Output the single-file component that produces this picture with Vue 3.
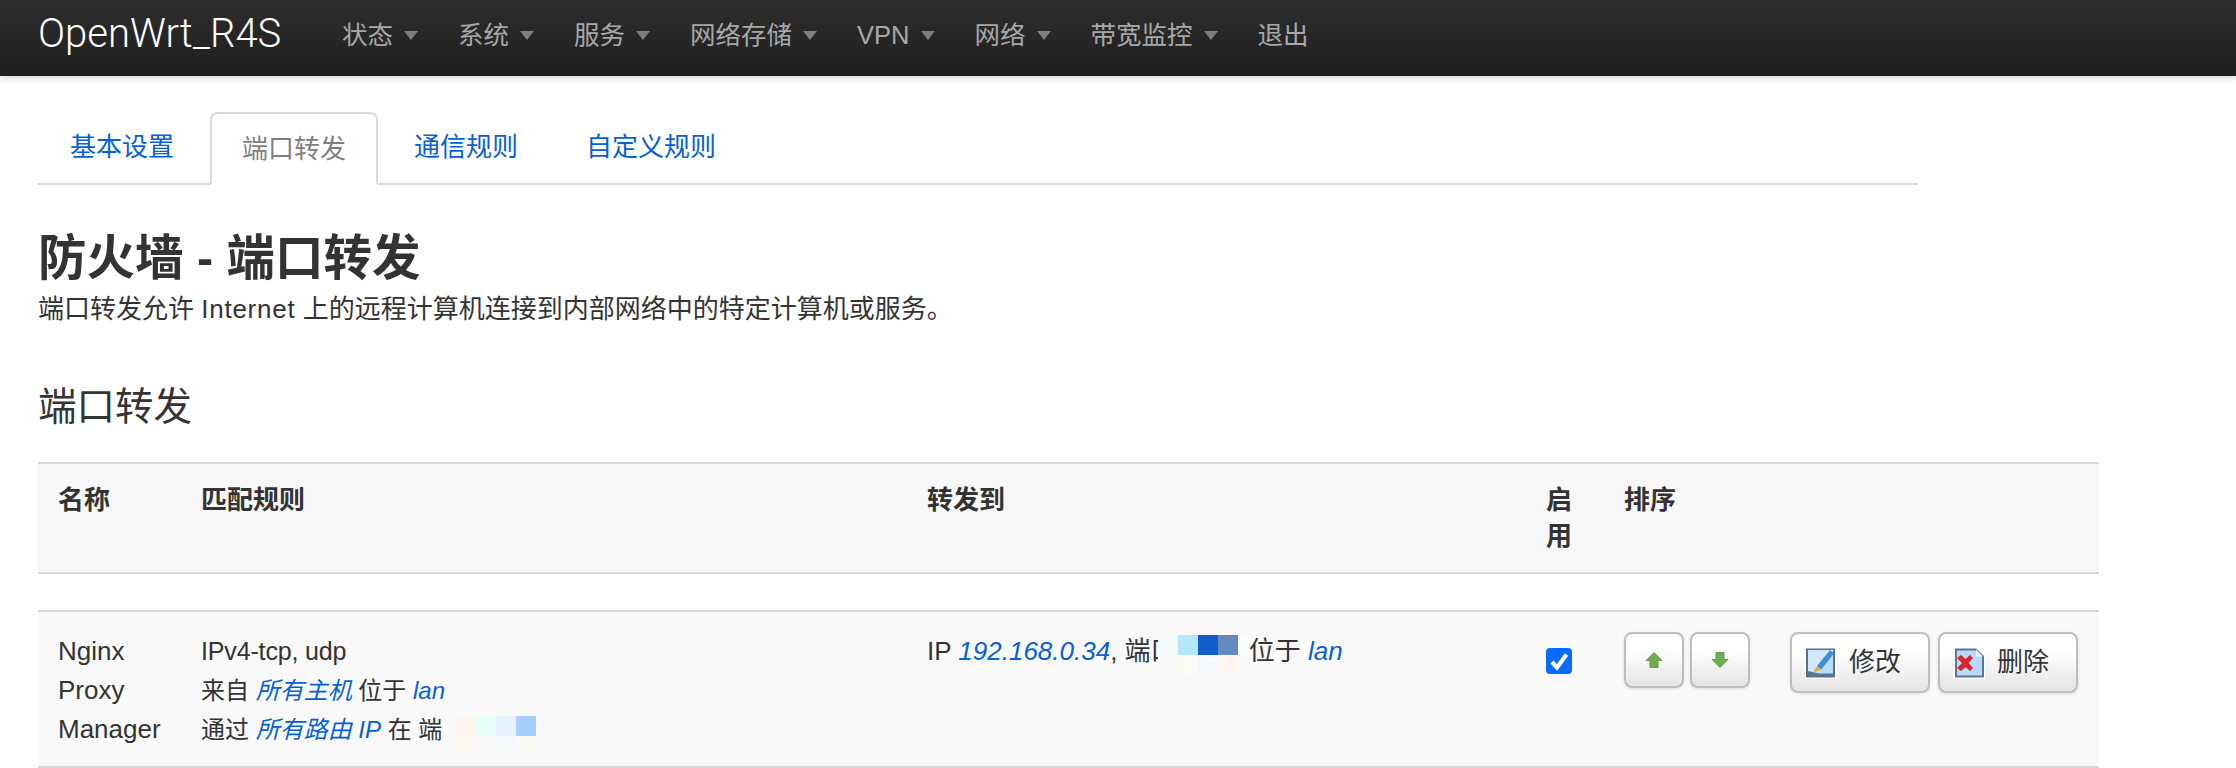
<script setup>
const navItems = [
  { label: '状态', caret: true },
  { label: '系统', caret: true },
  { label: '服务', caret: true },
  { label: '网络存储', caret: true },
  { label: 'VPN', caret: true },
  { label: '网络', caret: true },
  { label: '带宽监控', caret: true },
  { label: '退出', caret: false },
]
const tabs = [
  { label: '基本设置', active: false },
  { label: '端口转发', active: true },
  { label: '通信规则', active: false },
  { label: '自定义规则', active: false },
]
const mosaicA = ['#f5fbfd', '#b5e8fb', '#0f5ccb', '#6289c0', '#fcfdfd', '#f9f9f9', '#fbfcf5', '#f5f8ff', '#fff6f3', '#f9f9f9']
const mosaicB = ['#fff5ec', '#e6fff8', '#e6f3ff', '#a6ceff', '#fff8f2', '#fafafa', '#f5f9ff', '#f9fbf5']
</script>

<template>
  <div class="page">
    <header class="navbar">
      <a class="brand">OpenWrt_R4S</a>
      <ul class="nav">
        <li v-for="item in navItems" :key="item.label" class="nav-item">
          <span>{{ item.label }}</span>
          <i v-if="item.caret" class="caret"></i>
        </li>
      </ul>
    </header>

    <main class="main">
      <ul class="tabs">
        <li v-for="tab in tabs" :key="tab.label" class="tab" :class="{ active: tab.active }">{{ tab.label }}</li>
      </ul>

      <h2 class="title">防火墙 - 端口转发</h2>
      <p class="desc">端口转发允许 <span class="wide-latin">Internet</span> 上的远程计算机连接到内部网络中的特定计算机或服务。</p>
      <h3 class="section">端口转发</h3>

      <table class="table">
        <colgroup>
          <col class="c1" /><col class="c2" /><col class="c3" /><col class="c4" /><col class="c5" />
        </colgroup>
        <thead>
          <tr>
            <th>名称</th>
            <th>匹配规则</th>
            <th>转发到</th>
            <th>启用</th>
            <th>排序</th>
          </tr>
        </thead>
        <tbody>
          <tr class="spacer"><td colspan="5"></td></tr>
          <tr class="row">
            <td>Nginx Proxy Manager</td>
            <td class="rules">
              <div class="proto">IPv4-tcp, udp</div>
              <div>来自 <em>所有主机</em> 位于 <em>lan</em></div>
              <div class="nowrap">通过 <em>所有路由 IP</em> 在 端<span class="port port-b"><span class="mosaic mosaic-b"><i v-for="(c, i) in mosaicB" :key="i" :style="{ background: c }"></i></span></span></div>
            </td>
            <td class="nowrap">IP <em>192.168.0.34</em>, 端<span class="port port-a">口<span class="mosaic mosaic-a"><i v-for="(c, i) in mosaicA" :key="i" :style="{ background: c }"></i></span></span> 位于 <em>lan</em></td>
            <td>
              <span class="check">
                <input type="checkbox" checked />
                <svg viewBox="0 0 26 26" width="26" height="26"><path d="M6 14l5 5.500L20.500 6.500" fill="none" stroke="#fff" stroke-width="4.200" stroke-linejoin="miter" /></svg>
              </span>
            </td>
            <td>
              <div class="actions">
                <button class="btn arrow" type="button">
                  <svg viewBox="0 0 18 18" width="18" height="18"><path d="M9 1.500L17 9.500H13V16.500H5V9.500H1Z" fill="#6fae4e" stroke="#4f9136" stroke-width=".8" /></svg>
                </button>
                <button class="btn arrow" type="button">
                  <svg viewBox="0 0 18 18" width="18" height="18"><path d="M9 16.500L1 8.500H5V1.500H13V8.500H17Z" fill="#6fae4e" stroke="#4f9136" stroke-width=".8" /></svg>
                </button>
                <button class="btn wide first" type="button">
                  <svg class="ico" viewBox="0 0 32 32" width="32" height="32">
                    <rect width="32" height="32" fill="#fff" />
                    <rect x="2" y="2.500" width="27" height="27" fill="#b9dcf8" stroke="#54708f" stroke-width="2" />
                    <path d="M3 3h26L3 29z" fill="#d3e9fb" />
                    <path d="M3 29.500h27v-3H14L3 24z" fill="#5a7591" />
                    <path d="M12 19L25 3l4 3.500L16 22.500z" fill="#3f8ede" />
                    <path d="M12 19l4 3.500-7.500 3z" fill="#f0a830" />
                  </svg>
                  <span>修改</span>
                </button>
                <button class="btn wide" type="button">
                  <svg class="ico" viewBox="0 0 32 32" width="32" height="32">
                    <rect width="32" height="32" fill="#fff" />
                    <path d="M3 2.500h20l7 7v20H3z" fill="#b7dafa" stroke="#5d7690" stroke-width="2" />
                    <path d="M23 2.500v7h7z" fill="#eaf4fd" />
                    <path d="M4 11l4-3 4.500 4 4.500-4 3 3-4.500 5 4.500 5-3 3-4.500-4-4.500 4-4-3 5-5z" fill="#e0212a" />
                  </svg>
                  <span>删除</span>
                </button>
              </div>
            </td>
          </tr>
        </tbody>
      </table>
    </main>
  </div>
</template>

<style>
html, body { margin: 0; background: #fff; }
</style>

<style scoped>
.page {
  font-family: "Liberation Sans", "Noto Sans CJK SC", sans-serif;
  font-size: 26px;
  line-height: 39px;
  color: #333;
  height: 768px;
  overflow: hidden;
}
.navbar {
  display: flex;
  align-items: flex-start;
  height: 76px;
  padding-left: 38px;
  background: linear-gradient(#2d2d2d, #1f1f1f);
  box-shadow: 0 2px 6px rgba(0, 0, 0, .18);
}
.brand {
  font-family: Roboto, "Liberation Sans", sans-serif;
  font-weight: 300;
  font-size: 40px;
  line-height: 68px;
  color: #fff;
  width: 284px;
  flex: none;
  white-space: nowrap;
}
.nav { display: flex; list-style: none; margin: 0; padding: 0; }
.nav-item {
  display: flex;
  align-items: center;
  padding: 16px 20px 0;
  height: 39px;
  color: #a8a8a8;
  font-size: 25.500px;
  white-space: nowrap;
}
.caret {
  width: 0;
  height: 0;
  margin-left: 11px;
  border-left: 7.500px solid transparent;
  border-right: 7.500px solid transparent;
  border-top: 9px solid #7f7f7f;
}
.main { padding: 36px 0 0 38px; }
.tabs {
  display: flex;
  list-style: none;
  margin: 0;
  padding: 0;
  width: 1880px;
  height: 71px;
  border-bottom: 2px solid #d8d8d8;
}
.tab {
  width: 168px;
  height: 71px;
  margin-right: 4px;
  padding: 16px 0 0 32px;
  box-sizing: border-box;
  color: #0561d1;
  white-space: nowrap;
  flex: none;
}
.tab:last-child { width: auto; padding-right: 32px; }
.tab.active {
  height: 73px;
  padding-left: 30px;
  color: #808080;
  background: #fff;
  border: 2px solid #d8d8d8;
  border-bottom-color: #fff;
  border-radius: 8px 8px 0 0;
}
.title {
  margin: 47px 0 0;
  font-size: 48.500px;
  line-height: 52px;
  font-weight: 700;
  color: #333;
}
.desc { margin: 6px 0 0; }
.wide-latin { letter-spacing: .75px; }
.section {
  margin: 53px 0 0;
  font-size: 38.500px;
  line-height: 50px;
  font-weight: 400;
}
.table {
  display: table;
  margin-top: 30px;
  width: 2061px;
  table-layout: fixed;
  border-collapse: separate;
  border-spacing: 0;
}
.c1 { width: 143px; }
.c2 { width: 726px; }
.c3 { width: 619px; }
.c4 { width: 78px; }
th {
  padding: 17.500px 20px;
  line-height: 36.500px;
  text-align: left;
  vertical-align: top;
  font-weight: 700;
  background: #f7f7f7;
  border-top: 2px solid #d8d8d8;
  border-bottom: 2px solid #d8d8d8;
}
.spacer td { height: 36px; padding: 0; }
.row td {
  padding: 20px 20px 17px;
  vertical-align: top;
  background: #f9f9f9;
  border-top: 2px solid #d8d8d8;
  border-bottom: 2px solid #d8d8d8;
}
.row td.rules { font-size: 24px; }
.proto { font-size: 25px; letter-spacing: -.15px; }
.nowrap, .row td.nowrap { white-space: nowrap; }
em { font-style: italic; color: #0561d1; }
.port { display: inline-block; position: relative; vertical-align: top; }
.port-a { width: 91px; }
.port-b { width: 94px; }
.mosaic { position: absolute; display: grid; }
.mosaic i { display: block; }
.mosaic-a {
  left: 7px;
  top: 3px;
  grid-template-columns: repeat(4, 20px) 10px;
  grid-template-rows: 20px 20px;
}
.mosaic-b {
  left: 14px;
  top: 6px;
  grid-template-columns: repeat(4, 20px);
  grid-template-rows: 20px 11px;
}
.check {
  display: block;
  position: relative;
  width: 26px;
  height: 26px;
  margin-top: 16px;
}
.check input {
  display: block;
  appearance: none;
  width: 26px;
  height: 26px;
  margin: 0;
  background: #0a6cff;
  border-radius: 4px;
}
.check svg { position: absolute; left: 0; top: 0; pointer-events: none; }
.actions { display: flex; align-items: flex-start; }
.btn {
  display: flex;
  align-items: center;
  justify-content: center;
  box-sizing: border-box;
  flex: none;
  font: inherit;
  color: #333;
  padding: 0;
  background: linear-gradient(#fff, #fff 30%, #e4e4e4);
  border: 2px solid #bdbdbd;
  border-radius: 8px;
  box-shadow: 0 1px 3px rgba(0, 0, 0, .12);
}
.arrow {
  width: 60px;
  height: 56px;
  margin-right: 6px;
}
.arrow svg { display: block; }
.wide {
  width: 140px;
  height: 61px;
  margin-right: 8px;
  justify-content: flex-start;
  padding-left: 13px;
}
.first { margin-left: 34px; }
.ico { flex: none; margin-right: 12px; }
</style>
